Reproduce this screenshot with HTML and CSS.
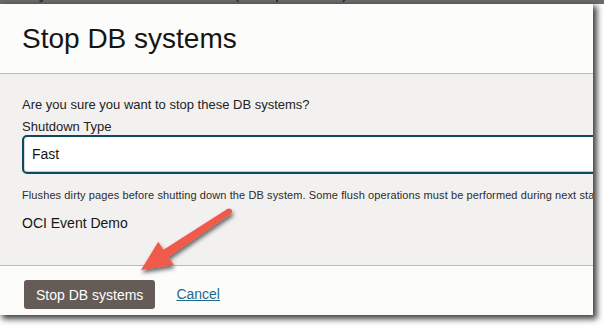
FILE: index.html
```html
<!DOCTYPE html>
<html lang="en">
<head>
  <meta charset="UTF-8">
  <meta name="viewport" content="width=device-width, initial-scale=1.0">
  <title>Stop DB systems</title>
  <link rel="stylesheet" href="styles.css">
</head>
<body>
  <div class="page">
    <div class="behind"><span>DB systems in sandbox active (Compartment)</span></div>

    <div class="dialog">
      <div class="dialog-header">
        <h1>Stop DB systems</h1>
      </div>

      <div class="dialog-body">
        <p class="question">Are you sure you want to stop these DB systems?</p>
        <label class="field-label" for="shutdown-type">Shutdown Type</label>
        <div class="select" id="shutdown-type">Fast</div>
        <p class="hint">Flushes dirty pages before shutting down the DB system. Some flush operations must be performed during next startup.</p>
        <p class="resource">OCI Event Demo</p>
      </div>

      <div class="dialog-footer">
        <button class="primary-btn">Stop DB systems</button>
        <a class="cancel-link" href="#">Cancel</a>
      </div>
    </div>

    <!-- annotation arrow drawn over the dialog -->
    <svg class="arrow" width="604" height="327" viewBox="0 0 604 327">
      <defs>
        <filter id="arrow-shadow" x="-20%" y="-20%" width="140%" height="140%">
          <feGaussianBlur in="SourceAlpha" stdDeviation="2"/>
          <feOffset dx="1" dy="3" result="blur"/>
          <feComponentTransfer><feFuncA type="linear" slope="0.6"/></feComponentTransfer>
          <feMerge><feMergeNode/><feMergeNode in="SourceGraphic"/></feMerge>
        </filter>
      </defs>
      <g filter="url(#arrow-shadow)" fill="#f05a4b">
        <path d="M227.3 209 L163.5 249.7 L158.3 241.7 L141 270 L173.7 265.1 L168.5 257.1 L230.7 214 Z"/>
        <circle cx="229" cy="211.5" r="3"/>
      </g>
    </svg>
  </div>
</body>
</html>
```

FILE: styles.css
```css
body {
  margin: 0;
  background: #fff;
  font-family: 'Liberation Sans', Arial, sans-serif;
  color: #222;
}

.page {
  position: relative;
  width: 604px;
  height: 327px;
  overflow: hidden;
  background: #fff;
}

.behind {
  height: 4px;
  overflow: hidden;
  background: #6b6b6b;
}

.behind span {
  display: block;
  margin-top: -15px;
  padding-left: 2px;
  font-size: 17px;
  line-height: 17px;
  color: #1e1e1e;
  white-space: nowrap;
}

.dialog {
  width: 593px;
  background: #fcfcfa;
  box-shadow: 3px 3px 6px 1px rgba(0, 0, 0, 0.75);
  overflow: hidden;
}

.dialog-header {
  height: 70px;
  padding: 20px 22px 0;
  box-sizing: border-box;
  border-bottom: 1px solid #bcbcbc;
}

.dialog-header h1 {
  margin: 0;
  font-size: 28px;
  line-height: 30px;
  font-weight: normal;
  color: #161513;
}

.dialog-body {
  height: 191px;
  box-sizing: border-box;
  padding: 23px 22px 0;
  background: #f2f1f0;
}

.question {
  margin: 0;
  font-size: 13px;
  line-height: 16px;
}

.field-label {
  display: block;
  margin-top: 6px;
  font-size: 13px;
  line-height: 16px;
}

.select {
  width: 600px;
  height: 39px;
  box-sizing: border-box;
  padding: 0 8px;
  border: 2px solid #0d4a61;
  border-radius: 5px;
  background: #fff;
  box-shadow: inset 0 -1px 0 #c9c9c9, inset 1px 0 0 #d6d6d6;
  font-size: 14px;
  line-height: 35px;
  color: #161513;
}

.hint {
  margin: 14px 0 0;
  font-size: 11px;
  line-height: 14px;
  letter-spacing: 0.1px;
  color: #2c2c2c;
  white-space: nowrap;
}

.resource {
  margin: 12px 0 0;
  font-size: 14px;
  line-height: 18px;
  color: #161513;
}

.dialog-footer {
  height: 50px;
  box-sizing: border-box;
  padding: 14px 24px 0;
  border-top: 1px solid #bcbcbc;
  display: flex;
  align-items: flex-start;
  gap: 21px;
}

.primary-btn {
  height: 29px;
  padding: 0 12px;
  border: none;
  border-radius: 3px;
  background: #655c57;
  color: #fff;
  font-family: inherit;
  font-size: 14px;
}

.cancel-link {
  font-size: 14px;
  line-height: 29px;
  color: #1d6a8a;
  text-decoration: underline;
}

.arrow {
  position: absolute;
  left: 0;
  top: 0;
  pointer-events: none;
}
```
